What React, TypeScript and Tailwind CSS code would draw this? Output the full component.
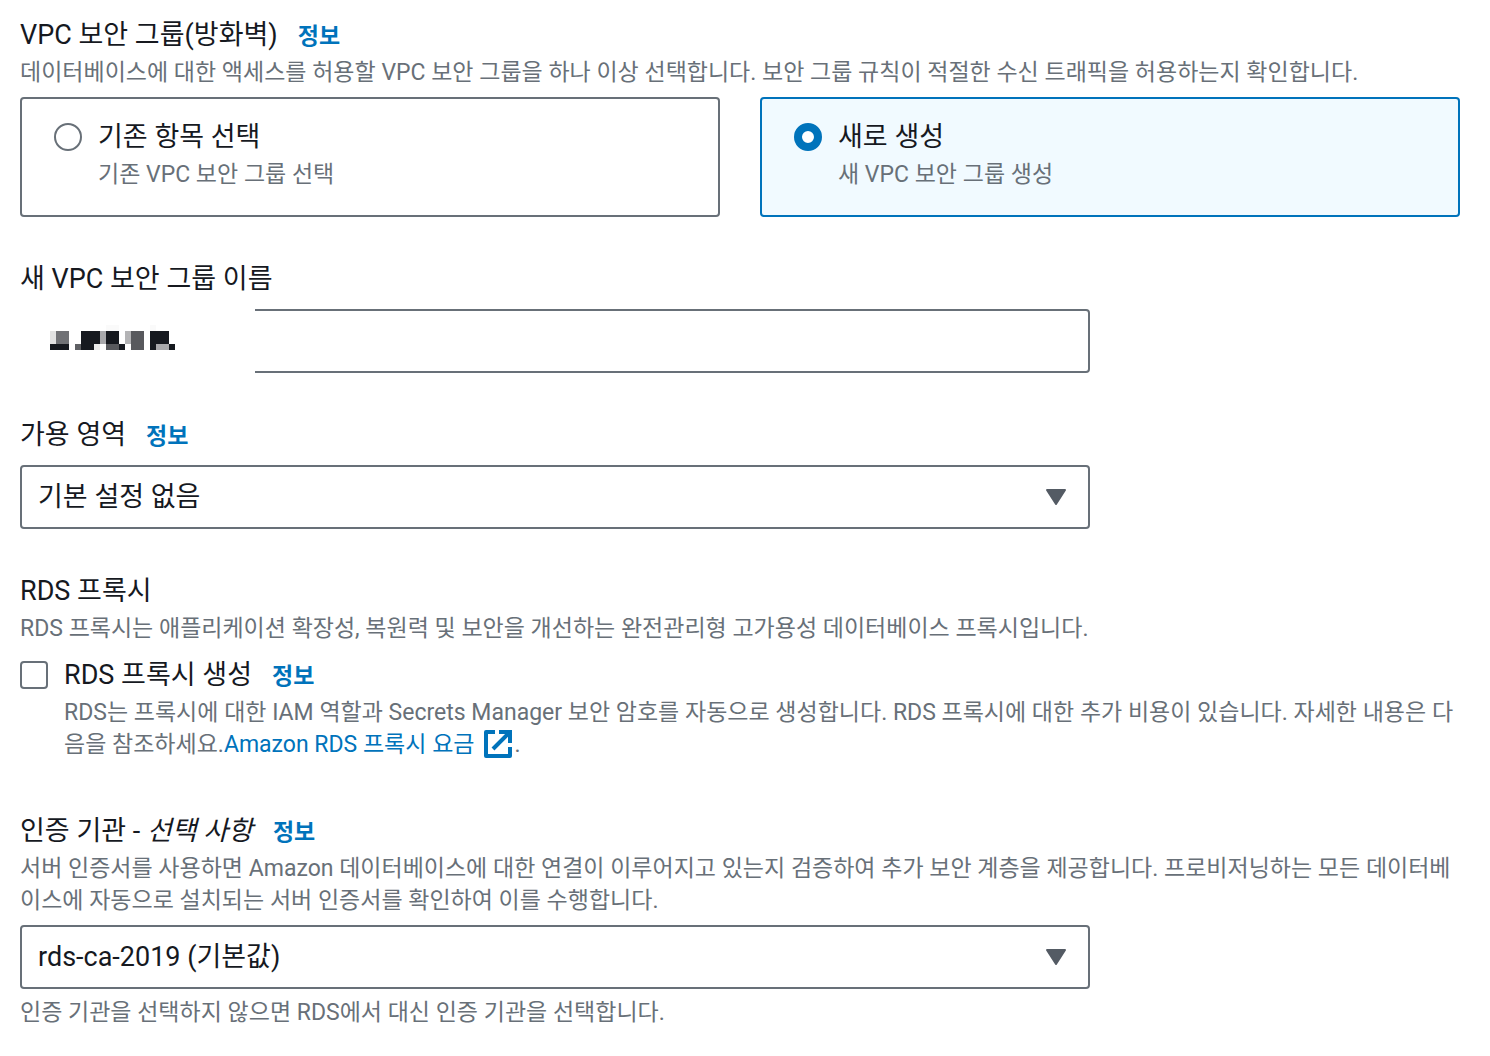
import React, { useState } from "react";

const InfoLink: React.FC = () => (
  <a
    href="#info"
    className="ml-5 text-[23px] leading-8 font-bold text-[#0073bb]"
  >
    정보
  </a>
);

const Description: React.FC<{ children: React.ReactNode }> = ({ children }) => (
  <p className="text-[23px] leading-8 break-all text-[#687078]">{children}</p>
);

const ExternalIcon: React.FC = () => (
  <svg
    viewBox="0 0 28 28"
    className="mr-0.5 ml-2.5 inline-block size-7 align-[-6px]"
    fill="none"
    stroke="currentColor"
    strokeWidth="4"
    aria-hidden="true"
  >
    <path d="M11 2H2v24h24v-9" strokeLinejoin="round" />
    <path d="M15 2h11v11" />
    <path d="M25 3 9 19" />
  </svg>
);

interface TileProps {
  label: string;
  description: string;
  checked: boolean;
  onChange: () => void;
}

const Tile: React.FC<TileProps> = ({
  label,
  description,
  checked,
  onChange,
}) => (
  <label
    className={`flex flex-1 items-start gap-4 rounded-[4px] border-2 px-8 pt-4 pb-6 ${
      checked ? "border-[#0073bb] bg-[#f1faff]" : "border-[#687078] bg-white"
    }`}
  >
    <input
      type="radio"
      name="security-group"
      checked={checked}
      onChange={onChange}
      className={`mt-2 size-7 shrink-0 appearance-none rounded-full bg-white ${
        checked ? "border-8 border-[#0073bb]" : "border-2 border-[#687078]"
      }`}
    />
    <span>
      <span className="block">{label}</span>
      <span className="block text-[23px] leading-8 text-[#687078]">
        {description}
      </span>
    </span>
  </label>
);

const SelectBox: React.FC<{ id: string; options: string[] }> = ({
  id,
  options,
}) => (
  <div className="relative mt-2 w-full max-w-[1070px]">
    <select
      id={id}
      className="block h-16 w-full appearance-none rounded-[4px] border-2 border-[#687078] bg-white px-4"
    >
      {options.map((o) => (
        <option key={o}>{o}</option>
      ))}
    </select>
    <svg
      viewBox="0 0 22 18"
      className="pointer-events-none absolute top-[23px] right-[23px] h-[18px] w-[22px]"
      aria-hidden="true"
    >
      <path
        d="M2 2h18l-9 14z"
        fill="#545b64"
        stroke="#545b64"
        strokeWidth="2"
        strokeLinejoin="round"
      />
    </svg>
  </div>
);

// x, y, width, height, fill
const MOSAIC: [number, number, number, number, string][] = [
  [168, 0, 39, 18, "#fafafa"],
  [300, 0, 18, 18, "#fafafa"],
  [0, 18, 18, 39, "#e2e2e2"],
  [18, 18, 39, 39, "#717276"],
  [93, 18, 57, 39, "#16191f"],
  [150, 18, 18, 39, "#a8a8ab"],
  [168, 18, 39, 39, "#16191f"],
  [225, 18, 18, 39, "#b3b3b5"],
  [243, 18, 39, 57, "#58595d"],
  [300, 18, 57, 39, "#16191f"],
  [0, 57, 57, 18, "#16191f"],
  [75, 57, 18, 18, "#5f6064"],
  [93, 57, 39, 18, "#16191f"],
  [132, 57, 18, 18, "#ebebeb"],
  [168, 57, 39, 18, "#58595d"],
  [207, 57, 18, 18, "#16191f"],
  [300, 57, 18, 18, "#16191f"],
  [318, 57, 39, 18, "#a8a8ab"],
  [357, 57, 18, 18, "#16191f"],
];

export default function App() {
  const [group, setGroup] = useState("new");
  const [name, setName] = useState("");
  const [proxy, setProxy] = useState(false);

  return (
    <main
      lang="ko"
      className="space-y-10 bg-white pt-[13px] pr-[30px] pb-6 pl-5 font-['Roboto','Noto_Sans_CJK_KR',sans-serif] text-[27px] leading-[44px] text-[#16191f]"
    >
      <section>
        <h2>
          VPC 보안 그룹(방화벽)
          <InfoLink />
        </h2>
        <Description>
          데이터베이스에 대한 액세스를 허용할 VPC 보안 그룹을 하나 이상
          선택합니다. 보안 그룹 규칙이 적절한 수신 트래픽을 허용하는지
          확인합니다.
        </Description>
        <div className="mt-2 flex gap-10">
          <Tile
            label="기존 항목 선택"
            description="기존 VPC 보안 그룹 선택"
            checked={group === "existing"}
            onChange={() => setGroup("existing")}
          />
          <Tile
            label="새로 생성"
            description="새 VPC 보안 그룹 생성"
            checked={group === "new"}
            onChange={() => setGroup("new")}
          />
        </div>
      </section>

      <section>
        <label htmlFor="group-name" className="block">
          새 VPC 보안 그룹 이름
        </label>
        <div className="relative mt-2 w-full max-w-[1070px]">
          <input
            id="group-name"
            type="text"
            value={name}
            onChange={(e) => setName(e.target.value)}
            className="block h-16 w-full rounded-[4px] border-2 border-[#687078] px-4"
          />
          {/* Masked name */}
          <div className="pointer-events-none absolute inset-y-0 left-0 w-[235px] bg-white pt-4 pl-[30px]">
            <svg
              viewBox="0 0 375 75"
              className="h-[25px] w-[125px]"
              shapeRendering="crispEdges"
              aria-hidden="true"
            >
              {MOSAIC.map(([x, y, w, h, fill]) => (
                <rect
                  key={`${x}-${y}`}
                  x={x}
                  y={y}
                  width={w}
                  height={h}
                  fill={fill}
                />
              ))}
            </svg>
          </div>
        </div>
      </section>

      <section>
        <label htmlFor="zone">가용 영역</label>
        <InfoLink />
        <SelectBox id="zone" options={["기본 설정 없음"]} />
      </section>

      <section>
        <h2>RDS 프록시</h2>
        <Description>
          RDS 프록시는 애플리케이션 확장성, 복원력 및 보안을 개선하는
          완전관리형 고가용성 데이터베이스 프록시입니다.
        </Description>
        <div className="mt-2 flex items-start gap-4">
          <input
            id="proxy"
            type="checkbox"
            checked={proxy}
            onChange={(e) => setProxy(e.target.checked)}
            className="mt-2 size-7 shrink-0 appearance-none rounded-[4px] border-2 border-[#687078] bg-white checked:border-[#0073bb] checked:bg-[#0073bb]"
          />
          <div>
            <label htmlFor="proxy">RDS 프록시 생성</label>
            <InfoLink />
            <Description>
              RDS는 프록시에 대한 IAM 역할과 Secrets Manager 보안 암호를
              자동으로 생성합니다. RDS 프록시에 대한 추가 비용이 있습니다.
              자세한 내용은 다음을 참조하세요.
              <a href="#pricing" className="text-[#0073bb]">
                Amazon RDS 프록시 요금
                <ExternalIcon />
              </a>
              .
            </Description>
          </div>
        </div>
      </section>

      <section className="pt-2">
        <label htmlFor="ca">
          인증 기관 - <i>선택 사항</i>
        </label>
        <InfoLink />
        <Description>
          서버 인증서를 사용하면 Amazon 데이터베이스에 대한 연결이 이루어지고
          있는지 검증하여 추가 보안 계층을 제공합니다. 프로비저닝하는 모든
          데이터베이스에 자동으로 설치되는 서버 인증서를 확인하여 이를
          수행합니다.
        </Description>
        <SelectBox id="ca" options={["rds-ca-2019 (기본값)"]} />
        <div className="mt-2">
          <Description>
            인증 기관을 선택하지 않으면 RDS에서 대신 인증 기관을 선택합니다.
          </Description>
        </div>
      </section>
    </main>
  );
}
